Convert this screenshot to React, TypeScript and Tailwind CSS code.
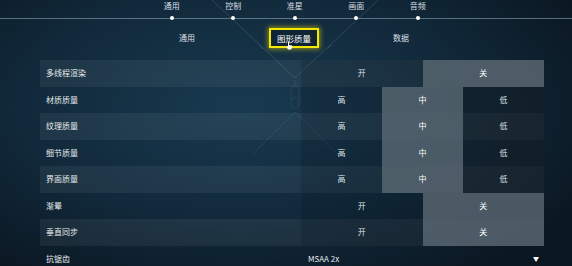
const tabs = ['通用', '控制', '准星', '画面', '音频']
const subTabs = ['通用', '图形质量', '数据']

interface Row {
  label: string
  options?: string[]
  selected?: number
  value?: string
}

const rows: Row[] = [
  { label: '多线程渲染', options: ['开', '关'], selected: 1 },
  { label: '材质质量', options: ['高', '中', '低'], selected: 1 },
  { label: '纹理质量', options: ['高', '中', '低'], selected: 1 },
  { label: '细节质量', options: ['高', '中', '低'], selected: 1 },
  { label: '界面质量', options: ['高', '中', '低'], selected: 1 },
  { label: '渐晕', options: ['开', '关'], selected: 1 },
  { label: '垂直同步', options: ['开', '关'], selected: 1 },
  { label: '抗锯齿', value: 'MSAA 2x' },
]

// 背景装饰线条
function Decor() {
  return (
    <svg className="pointer-events-none absolute inset-0" width="572" height="266" viewBox="0 0 572 266" fill="none">
      <g stroke="#6f97ab" strokeWidth="0.8" opacity="0.35">
        <path d="M212 0 L295 78 M378 0 L295 78" />
        <path d="M259 45 L263 49 M331 45 L327 49" />
      </g>
      <g stroke="#6f97ab" strokeWidth="0.8" opacity="0.2">
        <path d="M295 80 L295 86 M291 88 L291 106 Q295 110 299 106 L299 88 Q295 84 291 88" />
        <path d="M292 100 L295 97 L298 100" />
        <path d="M295 112 L252 155 M295 112 L338 155" />
      </g>
    </svg>
  )
}

export default function App() {
  return (
    <div className="relative w-[572px] h-[266px] overflow-hidden bg-[radial-gradient(ellipse_70%_80%_at_42%_40%,#183a50_0%,#11293a_55%,#0a1620_100%)] font-['Noto_Sans_CJK_SC','Noto_Sans',sans-serif] text-[#e3e9ec]">
      <Decor />

      {/* 顶部导航 */}
      <div className="relative">
        <div className="absolute left-0 right-0 top-[18px] h-px bg-[#8aa3b0]/60" />
        <div className="flex pl-[141px]">
          {tabs.map((t) => (
            <div key={t} className="flex w-[61.5px] flex-col items-center">
              <span className="text-[8px] leading-[12px] text-[#d5dde2]">{t}</span>
              <span className="relative mt-[4px] h-[4px] w-[4px] rounded-full bg-white" />
            </div>
          ))}
        </div>
      </div>

      {/* 子标签 */}
      <div className="relative mt-[8px] flex h-[20px] pl-[133.5px]">
        {subTabs.map((t, i) => (
          <div key={t} className="flex w-[107px] items-center justify-center">
            {i === 1 ? (
              <div className="relative flex h-[20px] w-[50px] items-center justify-center border-2 border-[#f6e800] bg-[#0f2434] shadow-[0_0_5px_1px_rgba(246,232,0,0.55)]">
                <span className="text-[8.5px] text-white">{t}</span>
                <svg className="absolute left-[15px] top-[11px]" width="7" height="9" viewBox="0 0 7 9">
                  <path d="M2 0.5 L3 0.5 L3 4 L6 4.5 L6 7 L5 8.5 L2 8.5 L0.5 6 L1 5 L2 5.5 Z" fill="#ffffff" />
                </svg>
              </div>
            ) : (
              <span className="text-[8px] text-[#d8dfe3]">{t}</span>
            )}
          </div>
        ))}
      </div>

      {/* 设置列表 */}
      <div className="relative ml-[40px] mt-[12px] w-[504px]">
        {rows.map((r, i) => (
          <div key={r.label} className={`flex h-[26.5px] ${i % 2 === 0 ? 'bg-white/[0.06]' : ''}`}>
            <div className="flex w-[261px] items-center pl-[6px] text-[8px] text-[#e6ebee]">{r.label}</div>
            {r.options ? (
              <div className="flex w-[243px]">
                {r.options.map((o, j) => {
                  const active = j === r.selected
                  let bg = 'bg-[#0a1620]/20'
                  if (active) bg = 'bg-[#56646f]/85'
                  else if (r.options!.length === 3 && j === 2) bg = 'bg-[#141c24]/45'
                  return (
                    <div key={o} className={`flex flex-1 items-center justify-center text-[8px] ${bg} ${active ? 'text-white' : 'text-[#dfe5e8]'}`}>
                      {o}
                    </div>
                  )
                })}
              </div>
            ) : (
              <div className="flex w-[243px] items-center justify-between pl-[7px] pr-[5px] text-[8px]">
                <span>{r.value}</span>
                <span className="text-[6px] text-white">▼</span>
              </div>
            )}
          </div>
        ))}
      </div>
    </div>
  )
}
